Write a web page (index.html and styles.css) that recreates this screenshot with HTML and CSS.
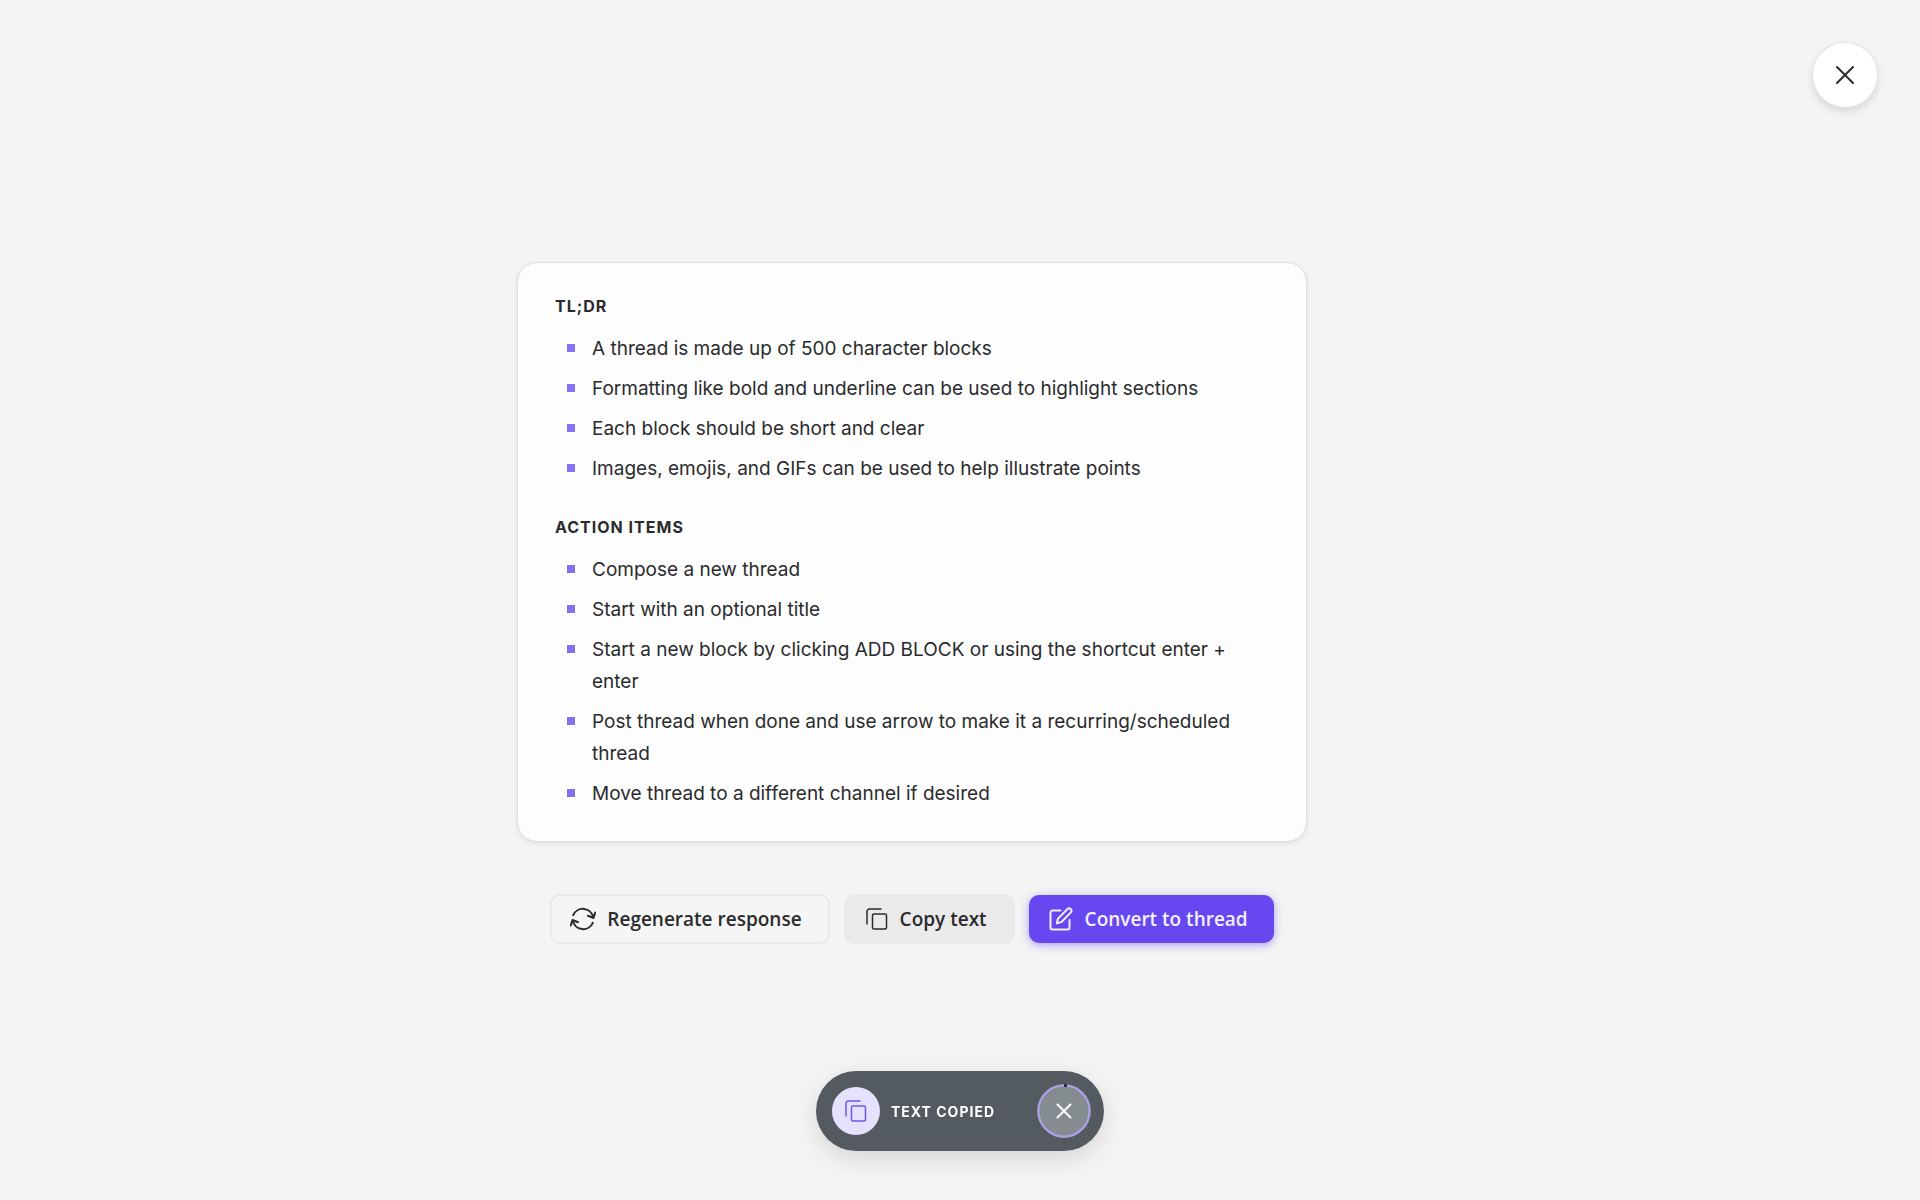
FILE: index.html
```
<!DOCTYPE html>
<html lang="en">
<head>
  <meta charset="UTF-8" />
  <meta name="viewport" content="width=device-width, initial-scale=1.0" />
  <title>Thread Summary</title>
  <link rel="stylesheet" href="styles.css">
</head>
<body>

  <button class="close-button" aria-label="Close">
    <svg width="20" height="20" viewBox="0 0 20 20"><path d="M2 2l16 16M18 2L2 18" /></svg>
  </button>

  <main>
    <div class="card">
      <h2>TL;DR</h2>
      <ul>
        <li>A thread is made up of 500 character blocks</li>
        <li>Formatting like bold and underline can be used to highlight sections</li>
        <li>Each block should be short and clear</li>
        <li>Images, emojis, and GIFs can be used to help illustrate points</li>
      </ul>

      <h2>ACTION ITEMS</h2>
      <ul>
        <li>Compose a new thread</li>
        <li>Start with an optional title</li>
        <li>Start a new block by clicking ADD BLOCK or using the shortcut enter + enter</li>
        <li>Post thread when done and use arrow to make it a recurring/scheduled thread</li>
        <li>Move thread to a different channel if desired</li>
      </ul>
    </div>

    <div class="button-container">
      <button class="regenerate">
        <svg width="26" height="26" viewBox="0 0 26 26">
          <path d="M3.2 9.2A10.500 10.500 0 0 1 23.200 11.500M25.300 6.500l-1.800 5.500-5.500-2.200" />
          <path d="M22.800 16.800A10.500 10.500 0 0 1 2.800 14.500M.7 19.500l1.800-5.500 5.500 2.200" />
        </svg>
        Regenerate response
      </button>
      <button class="copy">
        <svg width="22" height="24" viewBox="0 0 22 24">
          <rect x="6.500" y="7" width="14" height="15" rx="1.500" /><path d="M1 17V4.500a2.500 2.500 0 0 1 2.500-2.500H15" />
        </svg>
        Copy text
      </button>
      <button class="convert">
        <svg width="24" height="24" viewBox="0 0 24 24">
          <path d="M11.500 3.500H3.500a2 2 0 0 0-2 2v15a2 2 0 0 0 2 2h15a2 2 0 0 0 2-2V13" />
          <path d="M18.300 2.200a2.300 2.300 0 0 1 3.500 3.200L12.500 15l-4.700 1.400 1.200-4.800z" />
        </svg>
        Convert to thread
      </button>
    </div>
  </main>

  <div class="toast" role="status">
    <span class="toast-icon">
      <svg width="22" height="24" viewBox="0 0 22 24">
        <rect x="6.500" y="7" width="14" height="15" rx="1.500" /><path d="M1 17V4.500a2.500 2.500 0 0 1 2.500-2.500H15" />
      </svg>
    </span>
    <span class="toast-text">TEXT COPIED</span>
    <button class="toast-close" aria-label="Dismiss">
      <svg width="54" height="54" viewBox="0 0 54 54">
        <circle cx="27" cy="27" r="25.500" />
        <path class="gap" d="M27 1.500h3" />
        <path d="M20.500 20.500l13 13M33.500 20.500l-13 13" />
      </svg>
    </button>
  </div>

</body>
</html>
```
FILE: styles.css
```
* {
  box-sizing: border-box;
}
body {
  font-family: Inter, "Liberation Sans", sans-serif;
  background: #f4f4f4;
  margin: 0;
  color: #2a2b2d;
}
svg {
  display: block;
  flex: none;
  fill: none;
  stroke: currentColor;
  stroke-width: 2;
  stroke-linecap: round;
  stroke-linejoin: round;
}
button {
  border: none;
  padding: 0;
  color: inherit;
  cursor: pointer;
}
main {
  min-height: 100vh;
  padding: 262px 96px 64px 0;
  display: flex;
  flex-direction: column;
  align-items: center;
}
.close-button {
  position: fixed;
  top: 43px;
  right: 43px;
  width: 64px;
  height: 64px;
  display: flex;
  align-items: center;
  justify-content: center;
  background: #fff;
  border-radius: 50%;
  box-shadow: 0 0 0 1px #e4e4e4, 0 4px 10px rgba(0, 0, 0, 0.14);
}
.card {
  width: 100%;
  max-width: 790px;
  padding: 31px 37px;
  background: #fdfdfd;
  border: 1px solid #dcdcdc;
  border-radius: 20px;
  box-shadow: 0 2px 6px rgba(0, 0, 0, 0.08);
}
h2 {
  margin: 0 0 15px;
  font-size: 16px;
  line-height: 24px;
  font-weight: 700;
  letter-spacing: 1px;
}
ul {
  list-style: none;
  margin: 0 0 0 12px;
  padding: 0;
}
ul + h2 {
  margin-top: 30px;
}
li {
  display: flex;
  gap: 17px;
  font-size: 19px;
  line-height: 32px;
}
li + li {
  margin-top: 8px;
}
li::before {
  content: "";
  flex: none;
  width: 8px;
  height: 8px;
  margin-top: 11px;
  background: #8770f2;
}
.button-container {
  margin-top: 52px;
  display: flex;
  align-items: center;
  gap: 14px;
}
.button-container button {
  display: flex;
  align-items: center;
  height: 50px;
  font-family: "Open Sans", "Noto Sans", sans-serif;
  font-size: 19px;
  font-weight: 600;
  border-radius: 10px;
}
.button-container .regenerate {
  gap: 11px;
  padding: 0 26px 0 18px;
  background: #f5f5f5;
  border: 2px solid #e9e9e9;
}
.button-container .copy {
  gap: 12px;
  padding: 0 28px 0 22px;
  background: #eaeaea;
}
.copy svg {
  stroke-width: 1.5;
}
.button-container .convert {
  gap: 12px;
  height: 48px;
  padding: 0 26px 0 20px;
  background: #6647f0;
  color: #f3f0ff;
  box-shadow: 0 2px 8px rgba(102, 71, 240, 0.5);
}
.toast {
  position: fixed;
  bottom: 49px;
  left: 50%;
  transform: translateX(-50%);
  display: flex;
  align-items: center;
  height: 80px;
  padding: 0 13px 0 16px;
  background: #545b60;
  border-radius: 40px;
  box-shadow: 0 8px 24px rgba(0, 0, 0, 0.12);
}
.toast-icon {
  display: flex;
  align-items: center;
  justify-content: center;
  width: 48px;
  height: 48px;
  border-radius: 50%;
  background: #e6e1fc;
  color: #7356ec;
}
.toast-icon svg {
  stroke-width: 1.5;
}
.toast-text {
  margin: 0 42px 0 11px;
  color: #fff;
  font-size: 14px;
  font-weight: 700;
  letter-spacing: 1px;
}
.toast-close {
  width: 54px;
  height: 54px;
  border-radius: 50%;
  background: #858c8f;
  color: #fff;
}
.toast-close circle {
  stroke: #aaa0ee;
}
.toast-close .gap {
  stroke: #2a2b3d;
  stroke-width: 3;
  stroke-linecap: butt;
}
```
